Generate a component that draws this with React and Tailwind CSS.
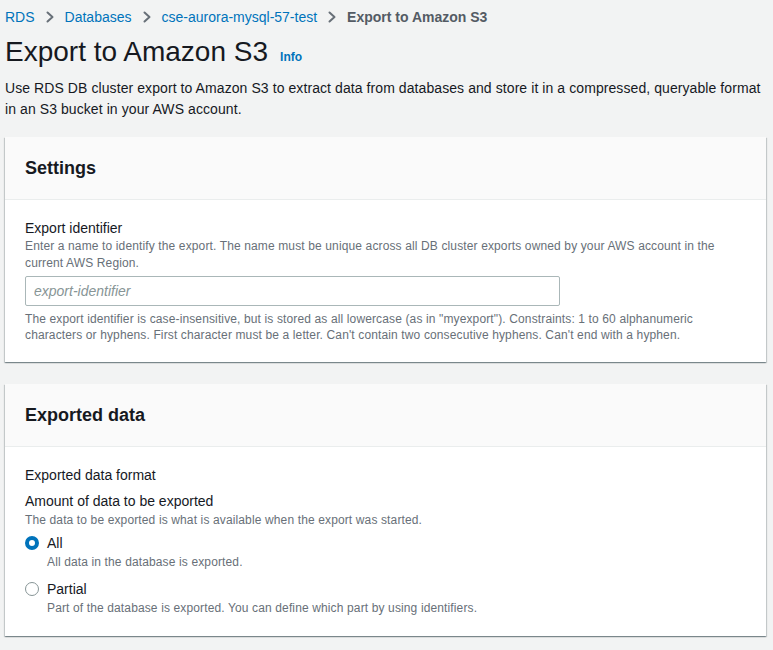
function Chevron() {
  return (
    <svg width="8" height="12" viewBox="0 0 8 12" className="mx-[11px]" fill="none">
      <path d="M1.5 1.5 L6.5 6 L1.5 10.5" stroke="#687078" strokeWidth="2" strokeLinecap="round" strokeLinejoin="round" />
    </svg>
  );
}

function Card({ title, children }) {
  return (
    <div className="bg-white shadow-[0_1px_1px_0_rgba(0,28,36,0.3),1px_1px_1px_0_rgba(0,28,36,0.15),-1px_1px_1px_0_rgba(0,28,36,0.15)]">
      <div className="bg-[#fafafa] border-b border-[#eaeded] px-5 h-[63px] flex items-center">
        <h2 className="text-[18px] font-bold text-[#16191f]">{title}</h2>
      </div>
      <div className="px-5 pt-[18px]">{children}</div>
    </div>
  );
}

function Radio({ checked, label, desc }) {
  return (
    <div className="flex gap-[8px]">
      <div className="pt-[4px]">
        {checked ? (
          <div className="w-[14px] h-[14px] rounded-full border-[4px] border-[#0073bb] bg-white" />
        ) : (
          <div className="w-[14px] h-[14px] rounded-full border-[1.5px] border-[#879596] bg-white" />
        )}
      </div>
      <div>
        <div className="text-[14px] leading-[22px] text-[#16191f]">{label}</div>
        <div className="text-[12px] leading-[16px] text-[#687078] tracking-[0.13px]">{desc}</div>
      </div>
    </div>
  );
}

export default function App() {
  const crumbs = ['RDS', 'Databases', 'cse-aurora-mysql-57-test'];

  return (
    <div className="min-h-screen bg-[#f2f3f3] pl-[5px] pr-[7px] pb-4 font-['Liberation_Sans',Arial,sans-serif] text-[#16191f]">
      <nav className="flex items-center h-[34px] text-[14px]">
        {crumbs.map(c => (
          <span key={c} className="flex items-center">
            <a className="text-[#0073bb]">{c}</a>
            <Chevron />
          </span>
        ))}
        <span className="font-bold text-[#545b64]">Export to Amazon S3</span>
      </nav>

      <div className="flex items-end gap-[12px] mt-[1px]">
        <h1 className="text-[28px] leading-[34px] text-[#16191f]">Export to Amazon S3</h1>
        <a className="text-[12px] font-bold text-[#0073bb] mb-[3px]">Info</a>
      </div>
      <p className="text-[14px] leading-[21px] text-[#16191f] mt-[9px] pr-[4px] tracking-[0.08px]">
        Use RDS DB cluster export to Amazon S3 to extract data from databases and store it in a compressed, queryable format in an S3 bucket in your AWS account.
      </p>

      <div className="mt-[17px]">
        <Card title="Settings">
          <div className="text-[14px] leading-[20px] text-[#16191f]">Export identifier</div>
          <div className="text-[12px] leading-[17px] text-[#687078] tracking-[0.13px]">
            Enter a name to identify the export. The name must be unique across all DB cluster exports owned by your AWS account in the current AWS Region.
          </div>
          <input
            placeholder="export-identifier"
            className="mt-[4px] w-[535px] h-[30px] border border-[#aab7b8] rounded-[2px] px-[8px] text-[14px] placeholder:italic placeholder:text-[#879596] outline-none block"
          />
          <div className="mt-[5px] pb-[19px] text-[12px] leading-[16px] text-[#687078] tracking-[0.13px]">
            The export identifier is case-insensitive, but is stored as all lowercase (as in "myexport"). Constraints: 1 to 60 alphanumeric characters or hyphens. First character must be a letter. Can't contain two consecutive hyphens. Can't end with a hyphen.
          </div>
        </Card>
      </div>

      <div className="mt-[22px]">
        <Card title="Exported data">
          <div className="text-[14px] leading-[20px] text-[#16191f]">Exported data format</div>
          <div className="text-[14px] leading-[20px] text-[#16191f] mt-[6px]">Amount of data to be exported</div>
          <div className="text-[12px] leading-[16px] text-[#687078] mt-[1px] tracking-[0.13px]">The data to be exported is what is available when the export was started.</div>
          <div className="mt-[4px] pb-[20px] flex flex-col gap-[8px]">
            <Radio checked label="All" desc="All data in the database is exported." />
            <Radio label="Partial" desc="Part of the database is exported. You can define which part by using identifiers." />
          </div>
        </Card>
      </div>
    </div>
  );
}
